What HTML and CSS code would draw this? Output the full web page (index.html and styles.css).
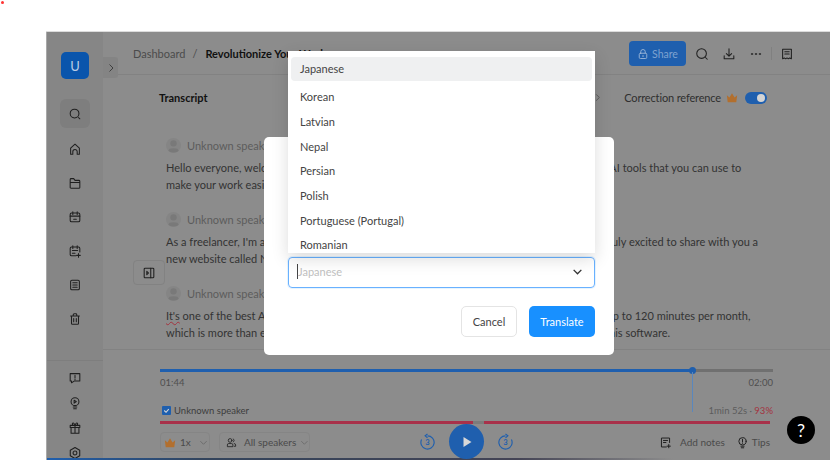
FILE: index.html
```html
<!DOCTYPE html>
<html lang="en">
<head>
    <meta charset="UTF-8">
    <title>Transcript</title>
    <link rel="stylesheet" href="styles.css">
</head>
<body>
    <div class="red-dot"></div>

    <div class="window">
        <!-- Sidebar -->
        <aside class="sidebar">
            <div class="avatar">U</div>
            <div class="side-search">
                <svg class="ico" viewBox="0 0 16 16"><circle cx="7.500" cy="7.500" r="5"/><path d="M12 12l1.500 1.500"/></svg>
            </div>
            <nav class="side-nav">
                <svg class="ico" viewBox="0 0 16 16"><path d="M3 14V7l5-4.500 5 4.500v7h-2.500v-3a2.500 2.500 0 0 0-5 0v3z"/></svg>
                <svg class="ico" viewBox="0 0 16 16"><path d="M2.500 13V4a1 1 0 0 1 1-1h3l1.500 2h4.500a1 1 0 0 1 1 1v7a1 1 0 0 1-1 1h-9a1 1 0 0 1-1-1zM2.500 7.500h11"/></svg>
                <svg class="ico" viewBox="0 0 16 16"><rect x="2.500" y="3.500" width="11" height="10" rx="1.500"/><path d="M2.500 7h11M5.500 2v3M10.500 2v3M6.500 10.500h3"/></svg>
                <svg class="ico" viewBox="0 0 16 16"><path d="M13.500 9V5a1.500 1.500 0 0 0-1.500-1.500H4A1.500 1.500 0 0 0 2.500 5v7A1.500 1.500 0 0 0 4 13.500h5M5.500 2v3M10.500 2v3M5 7.500h6M5 10.500h3M12 11v4M10 13h4"/></svg>
                <svg class="ico" viewBox="0 0 16 16"><rect x="3" y="2.500" width="10" height="11" rx="1.500"/><path d="M5.500 5.500h5M5.500 8h5M5.500 10.500h5"/></svg>
                <svg class="ico" viewBox="0 0 16 16"><path d="M3 4.500h10M6 4.500V3a1 1 0 0 1 1-1h2a1 1 0 0 1 1 1v1.500M4 4.500V13a1 1 0 0 0 1 1h6a1 1 0 0 0 1-1V4.500M6.500 7.500v3.500M9.500 7.500v3.500"/></svg>
            </nav>
            <div class="side-bottom">
                <svg class="ico" viewBox="0 0 16 16"><path d="M2.500 3h11v8.500H7l-3 2v-2H2.500zM8 5v3M8 9.500v.5"/></svg>
                <svg class="ico" viewBox="0 0 16 16"><circle cx="8" cy="6.500" r="4.500"/><path d="M7 4.800l2.500 1.700L7 8.200zM6 12.500h4M6.500 14.500h3"/></svg>
                <svg class="ico" viewBox="0 0 16 16"><path d="M2.500 5h11v2.500h-11zM3.500 7.500v6.500h9V7.500M8 5v9M8 5C6 5 5 4 5 3s2-1.500 3 2c1-3.500 3-3 3-2s-1 2-3 2"/></svg>
                <svg class="ico" viewBox="0 0 16 16"><path d="M8 1.800l5.400 3.100v6.200L8 14.200l-5.400-3.100V4.900z"/><circle cx="8" cy="8" r="2.200"/></svg>
            </div>
        </aside>

        <main class="main">
            <!-- Top bar -->
            <header class="topbar">
                <div class="crumbs">
                    <span class="crumb">Dashboard</span>
                    <span class="crumb">/</span>
                    <span class="crumb-title">Revolutionize Your Work</span>
                </div>
                <div class="top-actions">
                    <button class="share-btn">
                        <svg class="ico" viewBox="0 0 16 16"><rect x="3" y="7" width="10" height="7" rx="1.500"/><path d="M5 7V5a3 3 0 0 1 6 0v2M8 10v1.500"/></svg>
                        Share
                    </button>
                    <svg class="ico" viewBox="0 0 16 16"><circle cx="7.500" cy="7.500" r="5.500"/><path d="M12 12l2 2"/></svg>
                    <svg class="ico" viewBox="0 0 16 16"><path d="M8 2v8M5 7.500L8 10.500l3-3M2.500 10v3.500h11V10"/></svg>
                    <svg class="ico" viewBox="0 0 16 16"><path class="dots" d="M3 8h1M7.500 8h1M12 8h1"/></svg>
                    <span class="top-sep"></span>
                    <svg class="ico" viewBox="0 0 16 16"><path d="M3 2.500h10v11l-2-1-1.500 1L8 12.500l-1.500 1L5 12.500l-2 1zM5.500 5.500h5M5.500 8h5"/></svg>
                </div>
            </header>

            <!-- Transcript -->
            <section class="transcript">
                <div class="transcript-head">
                    <h2>Transcript</h2>
                    <svg class="head-chev" viewBox="0 0 10 10"><path d="M3.500 1.500L7 5 3.500 8.500"/></svg>
                    <div class="correction">
                        <span>Correction reference</span>
                        <svg class="crown" viewBox="0 0 14 12"><path d="M1 3.500l3 2.500 3-5 3 5 3-2.500-1 8H2z"/></svg>
                        <span class="toggle"><span class="knob"></span></span>
                    </div>
                </div>
                <div class="block">
                    <div class="speaker"><span class="speaker-pic"><svg viewBox="0 0 14 14"><circle cx="7" cy="5" r="3"/><ellipse cx="7" cy="11.500" rx="4.500" ry="2"/></svg></span>Unknown speaker</div>
                    <p>Hello everyone, welcome to my channel. Today I'm going to share with you some great open AI tools that you can use to</p>
                    <p>make your work easier and more productive.</p>
                </div>
                <div class="block">
                    <div class="speaker"><span class="speaker-pic"><svg viewBox="0 0 14 14"><circle cx="7" cy="5" r="3"/><ellipse cx="7" cy="11.500" rx="4.500" ry="2"/></svg></span>Unknown speaker</div>
                    <p>As a freelancer, I'm always looking for new ways to save my time and money, and today I'm truly excited to share with you a</p>
                    <p>new website called Notta.</p>
                </div>
                <div class="block">
                    <div class="speaker"><span class="speaker-pic"><svg viewBox="0 0 14 14"><circle cx="7" cy="5" r="3"/><ellipse cx="7" cy="11.500" rx="4.500" ry="2"/></svg></span>Unknown speaker</div>
                    <p><span class="squiggle">It's</span> one of the best AI transcription tools out there, and you can use this completely free for up to 120 minutes per month,</p>
                    <p>which is more than enough for most people who want to try out and test all the features of this software.</p>
                </div>
            </section>

            <!-- Player -->
            <section class="player">
                <div class="track">
                    <div class="track-done"></div>
                    <div class="track-dot"></div>
                    <div class="track-line"></div>
                </div>
                <div class="times"><span>01:44</span><span>02:00</span></div>
                <div class="speaker-row">
                    <label class="check-label">
                        <span class="check"><svg viewBox="0 0 10 10"><path d="M2.500 5l2 2 3-3.500"/></svg></span>
                        Unknown speaker
                    </label>
                    <span class="speak-time">1min 52s · <em>93%</em></span>
                </div>
                <div class="red-track">
                    <span class="red-a"></span><span class="red-gap"></span><span class="red-b"></span>
                </div>
                <div class="controls">
                    <div class="controls-left">
                        <div class="ctl-btn speed">
                            <svg class="crown" viewBox="0 0 14 12"><path d="M1 3.500l3 2.500 3-5 3 5 3-2.500-1 8H2z"/></svg>
                            1x
                            <svg class="chev" viewBox="0 0 10 10"><path d="M1.500 3.500L5 7l3.500-3.500"/></svg>
                        </div>
                        <div class="ctl-btn speakers">
                            <svg class="ico" viewBox="0 0 16 16"><circle cx="6" cy="5" r="2.700"/><path d="M2 13.500v-2a2 2 0 0 1 2-2h4a2 2 0 0 1 2 2v2zM10.500 2.800a2.500 2.500 0 0 1 0 4.400M12 9.500a2 2 0 0 1 2 2v2h-2"/></svg>
                            <span>All speakers</span>
                            <svg class="chev" viewBox="0 0 10 10"><path d="M1.500 3.500L5 7l3.500-3.500"/></svg>
                        </div>
                    </div>
                    <div class="transport">
                        <svg class="skip" viewBox="0 0 18 18"><path d="M9 3a7 7 0 1 1-6.300 4M9 1L6.500 3 9 5"/><text x="9" y="12.500">3</text></svg>
                        <div class="play"><svg viewBox="0 0 12 12"><path d="M2.500 1l8 5-8 5z"/></svg></div>
                        <svg class="skip" viewBox="0 0 18 18"><path d="M9 3a7 7 0 1 0 6.300 4M9 1l2.500 2L9 5"/><text x="9" y="12.500">3</text></svg>
                    </div>
                    <div class="controls-right">
                        <span class="ctl-link"><svg class="ico" viewBox="0 0 16 16"><path d="M13 8V2.500H3v11h6M5.500 5.500h5M5.500 8h3M12 10.500v4M10 12.500h4"/></svg>Add notes</span>
                        <span class="ctl-link"><svg class="ico" viewBox="0 0 16 16"><circle cx="8" cy="6.500" r="4.500"/><path d="M8 4v3M8 8.500V9M6 12.500h4M6.500 14.500h3"/></svg>Tips</span>
                    </div>
                </div>
            </section>
        </main>

        <div class="expand-tab"><svg viewBox="0 0 10 10"><path d="M3.500 1.500L7 5 3.500 8.500"/></svg></div>
        <div class="panel-btn"><svg class="ico" viewBox="0 0 16 16"><rect x="2.500" y="2.500" width="11" height="11" rx="1"/><path d="M10 2.500v11M5.500 6l2 2-2 2z"/></svg></div>
        <div class="task-strip"></div>
    </div>

    <!-- Translate dialog -->
    <div class="modal">
        <div class="select">
            <span class="caret"></span>
            <span class="placeholder">Japanese</span>
            <svg viewBox="0 0 10 10"><path d="M1.500 3.500L5 7l3.500-3.500"/></svg>
        </div>
        <div class="modal-actions">
            <button class="btn-cancel">Cancel</button>
            <button class="btn-translate">Translate</button>
        </div>
    </div>

    <div class="dropdown">
        <div class="option active">Japanese</div>
        <div class="option">Korean</div>
        <div class="option">Latvian</div>
        <div class="option">Nepal</div>
        <div class="option">Persian</div>
        <div class="option">Polish</div>
        <div class="option">Portuguese (Portugal)</div>
        <div class="option">Romanian</div>
    </div>

    <div class="help">?</div>
</body>
</html>
```

FILE: styles.css
```css
/* Global Styles */
* {
    box-sizing: border-box;
}

html, body {
    height: 100%;
}

body {
    margin: 0;
    background: #fff;
    font-family: 'Lato', sans-serif;
    font-size: 11px;
    color: #3a3a3a;
    overflow: hidden;
    position: relative;
}

svg {
    display: block;
    fill: none;
}

button {
    font-family: inherit;
}

.ico {
    width: 14px;
    height: 14px;
    flex: none;
    stroke: #1f1f1f;
    stroke-width: 1.200;
    stroke-linejoin: round;
    stroke-linecap: round;
}

.red-dot {
    position: absolute;
    left: 1px;
    top: 1px;
    width: 3px;
    height: 3px;
    border-radius: 50%;
    background: #f33;
}

/* Window on the desktop */
.window {
    position: absolute;
    left: 46px;
    top: 32px;
    width: 784px;
    height: 428px;
    display: flex;
    background: #8c8c8c;
    border-left: 1px solid #a8a8a8;
    box-shadow: 0 -1px 0 #dcdcdc;
    overflow: hidden;
}

/* Sidebar */
.sidebar {
    width: 56px;
    flex: none;
    display: flex;
    flex-direction: column;
    align-items: center;
    padding-top: 20px;
    background: #868686;
}

.avatar {
    width: 28px;
    height: 28px;
    border-radius: 5px;
    background: #0a55ac;
    color: #b9cde6;
    font-size: 13px;
    display: flex;
    align-items: center;
    justify-content: center;
}

.side-search {
    width: 30px;
    height: 30px;
    margin-top: 20px;
    border-radius: 6px;
    background: #7e7e7e;
    display: flex;
    align-items: center;
    justify-content: center;
}

.side-nav {
    display: flex;
    flex-direction: column;
    align-items: center;
    gap: 20px;
    margin-top: 14px;
}

.side-bottom {
    width: 100%;
    margin-top: 34px;
    padding-top: 10px;
    border-top: 1px solid #7e7e7e;
    display: flex;
    flex-direction: column;
    align-items: center;
    gap: 11px;
}

/* Main column */
.main {
    flex: 1;
    min-width: 0;
    display: flex;
    flex-direction: column;
}

.topbar {
    height: 43px;
    flex: none;
    padding: 0 36px 0 30px;
    border-bottom: 1px solid #828282;
    display: flex;
    align-items: center;
    justify-content: space-between;
}

.crumbs {
    display: flex;
    gap: 7px;
    white-space: nowrap;
    padding-top: 1px;
}

.crumb {
    color: #4b4b4b;
}

.crumb-title {
    color: #111;
    font-weight: 700;
    margin-left: 1px;
}

.top-actions {
    display: flex;
    align-items: center;
    gap: 13px;
    padding-top: 1px;
}

.share-btn {
    width: 57px;
    height: 25px;
    border: none;
    border-radius: 4px;
    background: #1f5fae;
    color: #7ea3d0;
    font-size: 10.500px;
    display: flex;
    align-items: center;
    justify-content: center;
    gap: 3px;
    margin-right: -4px;
}

.share-btn .ico {
    stroke: #9db8d8;
    width: 12px;
    height: 12px;
}

.dots {
    stroke-width: 1.800;
}

.top-sep {
    width: 1px;
    height: 13px;
    margin: 0 -5px;
    background: #808080;
}

/* Transcript */
.transcript {
    flex: 1;
    padding: 0 63px;
    overflow: hidden;
}

.transcript-head {
    height: 45px;
    display: flex;
    align-items: center;
    margin-bottom: 15px;
    margin-left: -7px;
}

.transcript-head h2 {
    margin: 0;
    font-size: 11px;
    font-weight: 700;
    color: #111;
}

.head-chev {
    width: 9px;
    height: 9px;
    margin-left: auto;
    stroke: #555;
}

.correction {
    display: flex;
    align-items: center;
    gap: 5px;
    margin-left: 22px;
    color: #2f2f2f;
    letter-spacing: -0.150px;
}

.crown {
    width: 12px;
    height: 11px;
    flex: none;
}

.crown path {
    fill: #b26f2e;
}

.toggle {
    width: 22px;
    height: 12px;
    margin-left: 2px;
    border-radius: 6px;
    background: #1f5fae;
    display: flex;
    justify-content: flex-end;
    padding: 2px;
}

.knob {
    width: 8px;
    height: 8px;
    border-radius: 50%;
    background: #d4d4d4;
}

.block {
    height: 74px;
    white-space: nowrap;
}

.block p {
    margin: 0;
    line-height: 17px;
    color: #333;
}

.speaker {
    height: 20px;
    margin-bottom: 4px;
    display: flex;
    align-items: center;
    gap: 6px;
    color: #5c5c5c;
}

.speaker-pic {
    width: 15px;
    height: 15px;
    border-radius: 50%;
    background: #858585;
}

.speaker-pic svg {
    width: 15px;
    height: 15px;
    fill: #797979;
}

.squiggle {
    text-decoration: underline wavy #a3333f 1px;
}

/* Player */
.player {
    height: 111px;
    flex: none;
    padding: 19px 57px 0;
    border-top: 1px solid #828282;
    position: relative;
}

.track {
    height: 3px;
    background: #707070;
    position: relative;
}

.track-done {
    width: 533px;
    height: 3px;
    background: #1f5fae;
}

.track-dot {
    position: absolute;
    left: 529px;
    top: -2px;
    width: 7px;
    height: 7px;
    border-radius: 50%;
    background: #1f5fae;
}

.track-line {
    position: absolute;
    left: 532px;
    top: 3px;
    width: 1px;
    height: 40px;
    background: #5a87bd;
}

.times {
    display: flex;
    justify-content: space-between;
    margin-top: 4px;
    font-size: 9.500px;
    line-height: 13px;
    color: #4f4f4f;
}

.speaker-row {
    display: flex;
    justify-content: space-between;
    align-items: center;
    margin-top: 14px;
    height: 14px;
    font-size: 9.500px;
    color: #3d3d3d;
}

.check-label {
    display: flex;
    align-items: center;
    gap: 3px;
    margin-left: 2px;
}

.check {
    width: 9px;
    height: 9px;
    border-radius: 1px;
    background: #1f5fae;
}

.check svg {
    width: 9px;
    height: 9px;
    stroke: #d8d8d8;
    stroke-width: 1.200;
}

.speak-time {
    color: #5c5c5c;
}

.speak-time em {
    font-style: normal;
    color: #a3333f;
}

.red-track {
    display: flex;
    width: 610px;
    height: 3px;
    margin-top: 4px;
}

.red-a {
    width: 313px;
    background: #a8314a;
}

.red-gap {
    width: 11px;
    background: #7c7c7c;
}

.red-b {
    flex: 1;
    background: #a8314a;
}

.controls {
    display: flex;
    justify-content: space-between;
    margin-top: 8px;
    position: relative;
}

.controls-left {
    display: flex;
    gap: 9px;
}

.ctl-btn {
    height: 20px;
    border: 1px solid #858585;
    border-radius: 4px;
    display: flex;
    align-items: center;
    color: #4a4a4a;
    font-size: 10px;
    white-space: nowrap;
}

.speed {
    width: 50px;
    padding-left: 3px;
    gap: 4px;
}

.speakers {
    width: 91px;
    padding-left: 6px;
    gap: 7px;
}

.speakers .ico {
    width: 11px;
    height: 11px;
}

.speakers .chev {
    margin-left: -3px;
}

.chev {
    width: 9px;
    height: 9px;
    stroke: #6a6a6a;
    margin-left: 4px;
}

.transport {
    position: absolute;
    left: 259px;
    top: -8px;
    z-index: 1;
    display: flex;
    align-items: center;
    gap: 13px;
}

.skip {
    width: 17px;
    height: 17px;
    stroke: #1f5fae;
    stroke-width: 1.200;
}

.skip text {
    font-size: 8px;
    font-weight: 700;
    fill: #1f5fae;
    stroke: none;
    text-anchor: middle;
}

.play {
    width: 35px;
    height: 35px;
    border-radius: 50%;
    background: #1f5fae;
    display: flex;
    align-items: center;
    justify-content: center;
}

.play svg {
    width: 12px;
    height: 12px;
    fill: #d8d8d8;
}

.controls-right {
    display: flex;
    gap: 11px;
    margin-right: 3px;
    color: #4a4a4a;
    font-size: 10px;
}

.ctl-link {
    display: flex;
    align-items: center;
    gap: 8px;
}

.ctl-link:last-child {
    gap: 3px;
}

.ctl-link .ico {
    width: 13px;
    height: 13px;
}

/* Bits lying over the page */
.expand-tab {
    position: absolute;
    left: 56px;
    top: 25px;
    width: 15px;
    height: 21px;
    border-radius: 0 3px 3px 0;
    background: #848484;
    display: flex;
    align-items: center;
    justify-content: center;
}

.expand-tab svg {
    width: 10px;
    height: 10px;
    stroke: #3f3f3f;
}

.panel-btn {
    position: absolute;
    left: 86px;
    top: 228px;
    width: 32px;
    height: 25px;
    border: 1px solid #828282;
    border-radius: 4px;
    background: #8c8c8c;
    display: flex;
    align-items: center;
    justify-content: center;
}

.task-strip {
    position: absolute;
    left: 0;
    right: 0;
    bottom: 0;
    height: 2px;
    background: linear-gradient(90deg, #1f5fae 0, #33445c 20%, #445 60%, #8c8c8c 80%);
}

/* Translate dialog */
.modal {
    position: absolute;
    left: 264px;
    top: 137px;
    width: 350px;
    height: 218px;
    padding: 120px 19px 0 24px;
    border-radius: 5px;
    background: #fff;
}

.select {
    height: 31px;
    padding: 0 11px 2px 8px;
    border: 1px solid #69b1ff;
    border-radius: 4px;
    box-shadow: 0 0 0 1px #e6f4ff;
    display: flex;
    align-items: center;
    color: #bfbfbf;
}

.caret {
    width: 1px;
    height: 15px;
    background: #444;
}

.placeholder {
    flex: 1;
}

.select svg {
    width: 11px;
    height: 11px;
    stroke: #333;
    stroke-width: 1.200;
}

.modal-actions {
    display: flex;
    justify-content: flex-end;
    gap: 12px;
    margin-top: 18px;
}

.modal-actions button {
    height: 31px;
    border-radius: 5px;
    font-size: 11px;
}

.btn-cancel {
    width: 56px;
    border: 1px solid #e4e4e4;
    background: #fff;
    color: #444;
}

.btn-translate {
    width: 66px;
    border: none;
    background: #1890ff;
    color: #fff;
}

.dropdown {
    position: absolute;
    left: 288px;
    top: 51px;
    width: 307px;
    height: 202px;
    padding: 6px 3px 0;
    background: #fff;
    overflow: hidden;
    box-shadow: 0 6px 16px rgba(0, 0, 0, 0.14);
}

.option {
    height: 24.700px;
    padding: 0 9px;
    display: flex;
    align-items: center;
    color: #444;
    border-radius: 4px;
}

.option.active {
    height: 24px;
    padding-bottom: 1px;
    background: #eff0f1;
    margin-bottom: 3.500px;
}

.help {
    position: absolute;
    left: 787px;
    top: 416px;
    width: 28px;
    height: 28px;
    border-radius: 50%;
    background: #000;
    color: #fff;
    font-size: 18px;
    display: flex;
    align-items: center;
    justify-content: center;
}
```
